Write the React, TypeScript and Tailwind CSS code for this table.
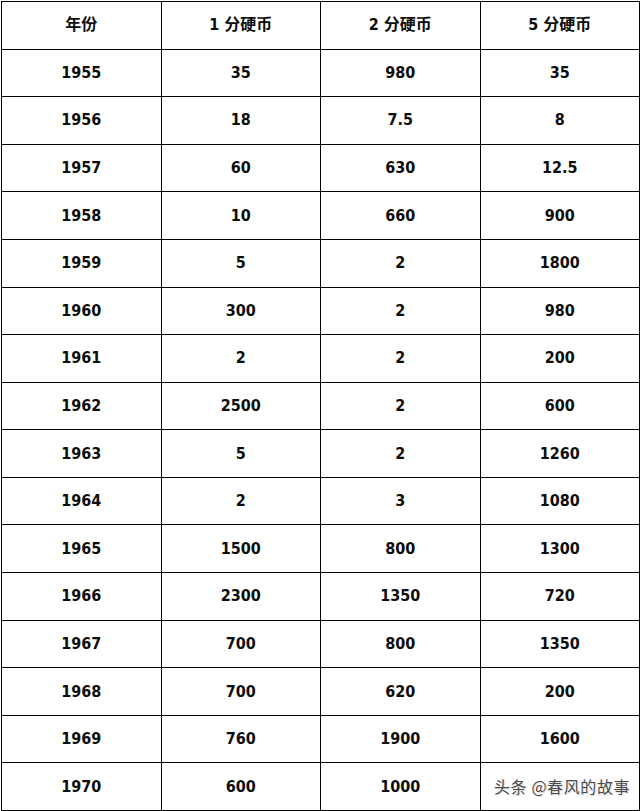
const header = ['年份', '1 分硬币', '2 分硬币', '5 分硬币'];

const rows: string[][] = [
  ['1955', '35', '980', '35'],
  ['1956', '18', '7.5', '8'],
  ['1957', '60', '630', '12.5'],
  ['1958', '10', '660', '900'],
  ['1959', '5', '2', '1800'],
  ['1960', '300', '2', '980'],
  ['1961', '2', '2', '200'],
  ['1962', '2500', '2', '600'],
  ['1963', '5', '2', '1260'],
  ['1964', '2', '3', '1080'],
  ['1965', '1500', '800', '1300'],
  ['1966', '2300', '1350', '720'],
  ['1967', '700', '800', '1350'],
  ['1968', '700', '620', '200'],
  ['1969', '760', '1900', '1600'],
  ['1970', '600', '1000', ''],
];

const cell =
  'flex items-center justify-center border-r border-b border-black text-[16px] font-bold text-[#0d0d0d]';

export default function App() {
  return (
    <div className="relative h-[811px] w-[642px] overflow-hidden bg-white pt-px pl-px font-['DejaVu_Sans_Condensed','DejaVu_Sans','Noto_Sans_CJK_SC',sans-serif]">
      <div className="grid h-[810px] w-[639px] grid-cols-4 grid-rows-[repeat(17,minmax(0,1fr))] border-t border-l border-black">
        {header.map((h) => (
          <div key={h} className={cell}>
            {h}
          </div>
        ))}
        {rows.map((r) =>
          r.map((v, i) => (
            <div key={r[0] + '-' + i} className={cell}>
              {v}
            </div>
          )),
        )}
      </div>
      <div className="absolute top-[774px] left-[494px] font-['Noto_Sans_CJK_SC',sans-serif] text-[16px] tracking-[0.6px] text-[#4a4a4a] [text-shadow:0_0_1px_#fff,1px_1px_0_#ddd]">
        头条 @春风的故事
      </div>
    </div>
  );
}
